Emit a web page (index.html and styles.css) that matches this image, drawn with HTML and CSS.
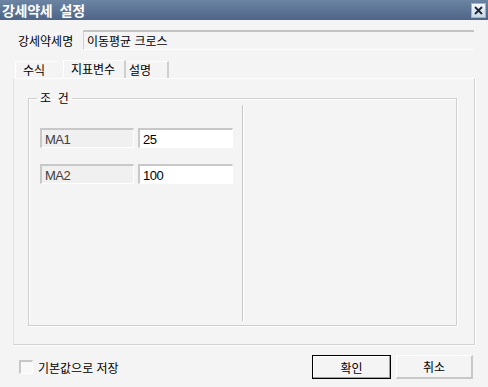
FILE: index.html
```html
<!DOCTYPE html>
<html lang="ko">
<head>
    <meta charset="UTF-8">
    <title>강세약세 설정</title>
    <link rel="stylesheet" href="styles.css">
</head>
<body>
    <div class="dialog">
        <div class="titlebar">
            <span class="title">강세약세&nbsp; 설정</span>
            <button class="close">
                <svg width="9" height="9" viewBox="0 0 9 9"><path d="M1 1 L8 8 M8 1 L1 8" stroke="#1b2533" stroke-width="1.8"/></svg>
            </button>
        </div>

        <div class="name-row">
            <span class="name-label">강세약세명</span>
            <div class="name-field">이동평균 크로스</div>
        </div>

        <div class="tabs">
            <div class="tab">수식</div>
            <div class="tab active">지표변수</div>
            <div class="tab last">설명</div>
        </div>

        <div class="panel">
            <fieldset class="group">
                <legend>조&nbsp; 건</legend>
                <div class="group-body">
                    <div class="params">
                        <div class="param">
                            <div class="param-name">MA1</div>
                            <div class="param-value">25</div>
                        </div>
                        <div class="param">
                            <div class="param-name">MA2</div>
                            <div class="param-value">100</div>
                        </div>
                    </div>
                    <div class="divider"></div>
                </div>
            </fieldset>
        </div>

        <div class="footer">
            <label class="check"><span class="box"></span>기본값으로 저장</label>
            <div class="actions">
                <button class="btn default">확인</button>
                <button class="btn">취소</button>
            </div>
        </div>
    </div>
</body>
</html>
```

FILE: styles.css
```css
body {
    margin: 0;
    background: #f4f4f4;
    font-family: "Noto Sans CJK KR", "DejaVu Sans", sans-serif;
    font-size: 12px;
    color: #000;
}
.dialog {
    width: 488px;
    height: 387px;
    display: flex;
    flex-direction: column;
    overflow: hidden;
}
.titlebar {
    height: 20px;
    display: flex;
    align-items: center;
    justify-content: space-between;
    padding: 0 2px 0 2px;
    background: linear-gradient(to bottom, #6c84a4, #4e6587);
}
.title {
    color: #fff;
    font-weight: bold;
    font-size: 14px;
    letter-spacing: -0.3px;
}
.close {
    width: 15px;
    height: 15px;
    padding: 0;
    border: 1px solid #9fb2c8;
    background: linear-gradient(to bottom, #f4f8fc, #c9d8e8);
    display: flex;
    align-items: center;
    justify-content: center;
}
.name-row {
    display: flex;
    align-items: center;
    margin-top: 10px;
    padding-left: 18px;
    height: 20px;
}
.name-label {
    width: 65px;
}
.name-field {
    width: 387px;
    height: 17px;
    line-height: 17px;
    padding-left: 3px;
    border-top: 2px solid #c4c4c4;
    border-left: 1px solid #d0d0d0;
    border-bottom: 1px solid #fff;
    background: #f4f4f4;
}
.tabs {
    display: flex;
    margin-top: 11px;
    margin-left: 15px;
    height: 17px;
    align-items: flex-end;
}
.tab {
    height: 16px;
    line-height: 16px;
    padding: 0 7px;
    border-top: 1px solid #fff;
    border-left: 1px solid #fff;
}
.tab:first-child {
    width: 28px;
    margin-right: 5px;
}
.tab.active {
    height: 18px;
    width: 46px;
    border-right: 2px solid #cfcfcf;
    margin-bottom: -1px;
}
.tab.last {
    width: 31px;
    border-left: none;
    border-right: 2px solid #cfcfcf;
    padding-left: 3px;
}
.panel {
    margin-left: 13px;
    width: 462px;
    height: 267px;
    box-sizing: border-box;
    border-top: 1px solid #fff;
    border-left: 1px solid #e2e2e2;
    border-right: 1px solid #cfcfcf;
    border-bottom: 1px solid #d2d2d2;
    box-shadow: 1px 1px 0 #fff;
    padding: 12px 0 0 14px;
}
.group {
    margin: 0;
    padding: 0;
    width: 429px;
    height: 235px;
    box-sizing: border-box;
    border: 1px solid #cfcfcf;
    box-shadow: inset 1px 1px 0 #fff, 1px 1px 0 #fff;
}
.group legend {
    margin-left: 8px;
    padding: 0 3px;
    line-height: 14px;
}
.group-body {
    display: flex;
    height: 100%;
}
.params {
    width: 213px;
    padding: 23px 0 0 11px;
    box-sizing: border-box;
    display: flex;
    flex-direction: column;
    gap: 16px;
}
.param {
    display: flex;
    gap: 4px;
}
.param-name,
.param-value {
    height: 20px;
    line-height: 19px;
    box-sizing: border-box;
    padding-left: 3px;
    border-top: 2px solid #c8c8c8;
    border-left: 2px solid #c8c8c8;
    border-bottom: 1px solid #fff;
    border-right: 1px solid #fff;
    font-family: "Liberation Sans", Arial, sans-serif;
    font-size: 13px;
    letter-spacing: -0.5px;
}
.param-name {
    width: 94px;
    background: #f0f0f0;
    color: #404040;
}
.param-value {
    width: 95px;
    background: #fff;
}
.divider {
    width: 1px;
    height: 216px;
    background: #c8c8c8;
    box-shadow: 1px 0 0 #fff;
}
.footer {
    display: flex;
    align-items: center;
    justify-content: space-between;
    margin-top: 10px;
    padding: 0 15px 0 19px;
}
.check {
    display: flex;
    align-items: center;
    gap: 5px;
}
.box {
    width: 11px;
    height: 11px;
    border-top: 2px solid #c8c8c8;
    border-left: 2px solid #c8c8c8;
    border-right: 1px solid #fff;
    border-bottom: 1px solid #fff;
    background: #f8f8f8;
}
.actions {
    display: flex;
    gap: 5px;
}
.btn {
    width: 77px;
    height: 24px;
    padding: 0;
    font: inherit;
    background: #f4f4f4;
    border-top: 1px solid #fff;
    border-left: 1px solid #fff;
    border-right: 2px solid #c8c8c8;
    border-bottom: 2px solid #c8c8c8;
}
.btn.default {
    width: 79px;
    border: 1px solid #000;
    box-shadow: inset -1px -1px 0 #a0a0a0, inset 1px 1px 0 #fff;
}
```
